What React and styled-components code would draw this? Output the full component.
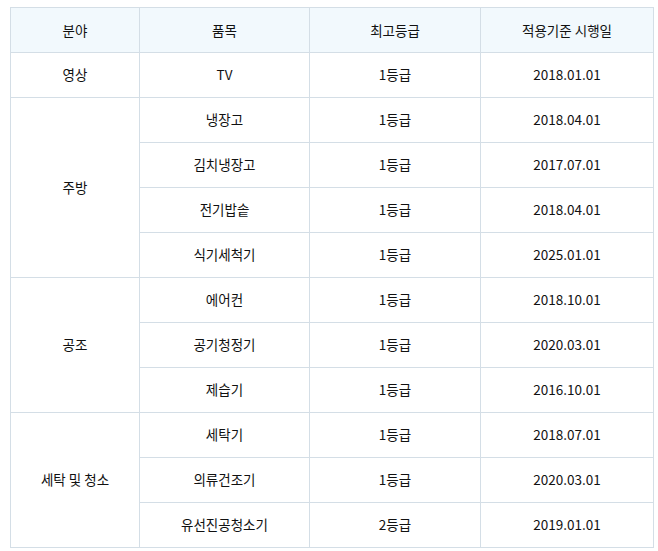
import React from "react";
import styled, { createGlobalStyle } from "styled-components";

const Global = createGlobalStyle`
  html, body { margin: 0; padding: 0; background: #ffffff; }
  body { font-family: "Noto Sans CJK KR", "Noto Sans", sans-serif; color: #111111; }
`;

const Wrap = styled.div`
  padding: 7px 5px 0 10px;
`;

const Table = styled.table`
  border-collapse: collapse;
  table-layout: fixed;
  width: 643px;
  font-size: 13.5px;
`;

const Col = styled.col`
  width: ${(p) => p.$w}px;
`;

const Th = styled.th`
  height: 44px;
  padding: 0;
  border: 1px solid #d4dee6;
  background: #f2f9fd;
  font-weight: 400;
  text-align: center;
  vertical-align: middle;
  color: #111111;
`;

const Td = styled.td`
  height: 44px;
  padding: 0;
  border: 1px solid #d4dee6;
  text-align: center;
  vertical-align: middle;
  color: #111111;
  font-weight: 400;
  line-height: 1;
`;

const groups = [
  { name: "영상", items: [["TV", "1등급", "2018.01.01"]] },
  {
    name: "주방",
    items: [
      ["냉장고", "1등급", "2018.04.01"],
      ["김치냉장고", "1등급", "2017.07.01"],
      ["전기밥솥", "1등급", "2018.04.01"],
      ["식기세척기", "1등급", "2025.01.01"],
    ],
  },
  {
    name: "공조",
    items: [
      ["에어컨", "1등급", "2018.10.01"],
      ["공기청정기", "1등급", "2020.03.01"],
      ["제습기", "1등급", "2016.10.01"],
    ],
  },
  {
    name: "세탁 및 청소",
    items: [
      ["세탁기", "1등급", "2018.07.01"],
      ["의류건조기", "1등급", "2020.03.01"],
      ["유선진공청소기", "2등급", "2019.01.01"],
    ],
  },
];

export default function App() {
  return (
    <>
      <Global />
      <Wrap>
        <Table>
          <colgroup>
            <Col $w={129} />
            <Col $w={170} />
            <Col $w={171} />
            <Col $w={173} />
          </colgroup>
          <thead>
            <tr>
              <Th>분야</Th>
              <Th>품목</Th>
              <Th>최고등급</Th>
              <Th>적용기준 시행일</Th>
            </tr>
          </thead>
          <tbody>
            {groups.map((g) =>
              g.items.map((it, i) => (
                <tr key={g.name + it[0]}>
                  {i === 0 && <Td rowSpan={g.items.length}>{g.name}</Td>}
                  <Td>{it[0]}</Td>
                  <Td>{it[1]}</Td>
                  <Td>{it[2]}</Td>
                </tr>
              ))
            )}
          </tbody>
        </Table>
      </Wrap>
    </>
  );
}
